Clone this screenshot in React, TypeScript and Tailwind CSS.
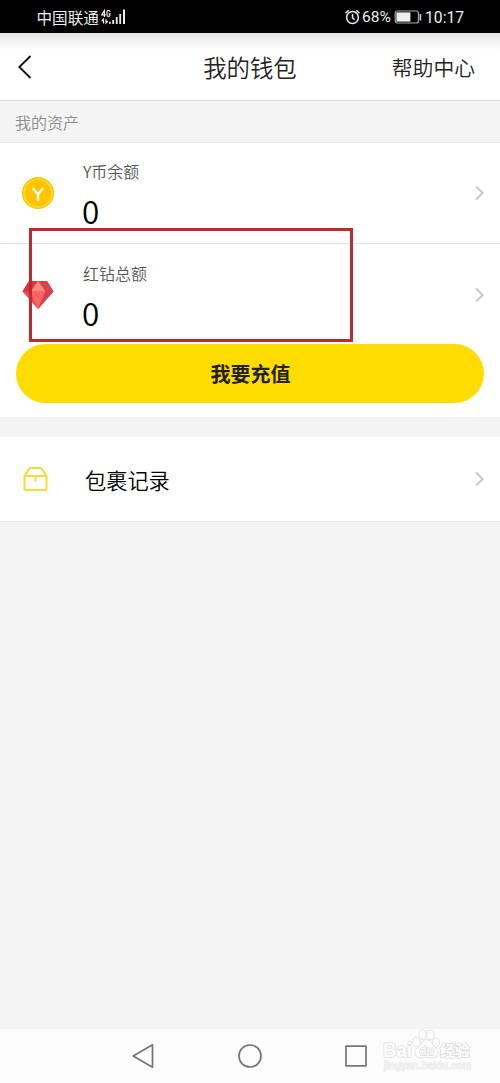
import type { ReactNode } from "react";

function StatusBar() {
  return (
    <div className="flex h-[33px] shrink-0 items-center bg-black pr-[35px] pl-[36.5px] text-[#eeeeee]">
      <span className="relative top-px text-[15.6px] leading-none">中国联通</span>
      <svg className="ml-[2px]" width="25" height="16" viewBox="0 0 25 16" fill="currentColor">
        <g fill="none" stroke="currentColor" strokeWidth="1.2">
          <path d="M3.4 8V1.5L.7 5.900h4.100M9 2.800C9 .9 6 .9 6 2.800v3.100c0 2 3 2 3 0V4.900H7.600" />
          <path d="M.8 12l1.700-1.800V14.500M5 10.200V14l1.800-1.800" />
        </g>
        <path d="M8.200 12.800h1.500V15H8.200zM11.300 11h1.800v4h-1.800zM14.800 8h1.800v7h-1.800zM18.300 5h1.800v10h-1.800zM22 .5h2V15h-2z" />
      </svg>

      <div className="ml-auto flex items-center font-[Roboto] text-[16px] leading-none">
        <svg width="17" height="16" viewBox="0 0 17 16" fill="none" stroke="currentColor" strokeWidth="1.5">
          <circle cx="7.5" cy="8.5" r="5.9" />
          <path d="M7.500 5v3.800l2 2M.5 4.200l3.200-2.900M14.500 4.200l-3.200-2.900" />
        </svg>
        <span className="relative top-px w-[32px] text-[15.5px]">68%</span>
        <svg width="28" height="14" viewBox="0 0 28 14">
          <rect x="1.2" y="1" width="23.2" height="12" rx="2" fill="none" stroke="#a8a8a8" strokeWidth="1.2" />
          <rect x="2.4" y="2.4" width="14" height="9.2" fill="#eeeeee" />
          <path d="M25.600 4h1.600v6.500h-1.600z" fill="#d5d5d5" />
        </svg>
        <span className="relative top-px ml-[3px] w-[40px] text-[15.7px] whitespace-nowrap">10:17</span>
      </div>
    </div>
  );
}

function Header() {
  return (
    <header className="grid h-[68px] shrink-0 grid-cols-3 items-center border-b border-[#dedede] bg-linear-to-b from-[#e5e5e5] to-white to-25% pr-[25px] pl-[17px] text-[#222222]">
      <svg width="16" height="26" viewBox="0 0 16 26" fill="none" stroke="#111111" strokeWidth="1.8">
        <path d="M13.5 2L2.3 13l11.2 11" />
      </svg>
      <h1 className="pt-0.5 text-center text-[23.4px] leading-none font-[350] whitespace-nowrap">
        <span className="relative left-[4px]">我的钱包</span>
      </h1>
      <span className="pt-0.5 text-right text-[20.8px] leading-none font-[350]">帮助中心</span>
    </header>
  );
}

function Chevron() {
  return (
    <svg
      className="mr-[15px] ml-auto"
      width="10"
      height="16"
      viewBox="0 0 10 16"
      fill="none"
      stroke="#c4c4c4"
      strokeWidth="1.8"
    >
      <path d="M1 1.500L7.700 8 1 14.500" />
    </svg>
  );
}

function CoinIcon() {
  return (
    <svg width="32" height="32" viewBox="0 0 32 32">
      <circle cx="16" cy="16" r="16" fill="#f8bf13" />
      <circle cx="16" cy="16" r="14" fill="#ffc400" stroke="#ffdc13" strokeWidth="1.7" />
      <path d="M10.800 11l5.200 6.500L21.200 11M16 17v7" fill="none" stroke="#fffbe0" strokeWidth="2.6" />
    </svg>
  );
}

function DiamondIcon() {
  return (
    <svg width="32" height="28" viewBox="0 0 32 28">
      <path d="M7 0h18l6.500 10.500L16 28 .5 10.500z" fill="#e84a50" />
      <path d="M7 0h9L8.500 10.500H.5z" fill="#d9343c" />
      <path d="M16 0h9l6.500 10.500h-8z" fill="#d6434d" />
      <path d="M16 0l7.500 10.500h-15z" fill="#ff8a80" />
      <path d="M8.500 10.500h15L16 28z" fill="#ff6262" />
      <path d="M23.500 10.500h8L16 28z" fill="#d6424b" />
    </svg>
  );
}

function PackageIcon() {
  return (
    <svg width="25" height="24" viewBox="0 0 25 24" fill="none" stroke="#f6dc35" strokeWidth="2" strokeLinejoin="round">
      <path d="M1.500 9l4.700-7.200q.5-.8 1.400-.8h9.800q.9 0 1.400.8L23.500 9v12.500q0 1.500-1.500 1.500H3q-1.500 0-1.500-1.500zM1.500 9h22M12.500 9v5.500" />
    </svg>
  );
}

function AssetRow({ icon, label, value }: { icon: ReactNode; label: string; value: string }) {
  return (
    <div className="flex h-full items-center">
      <div className="flex w-[76px] shrink-0 justify-center">{icon}</div>
      <div className="flex flex-col pt-[3px] pl-[7px]">
        <span className="text-[16px] leading-[20px] font-[350] text-[#555555]">{label}</span>
        <span className="mt-[11px] -ml-px text-[31.5px] leading-[36px] font-[350] text-black">{value}</span>
      </div>
      <Chevron />
    </div>
  );
}

function Watermark() {
  return (
    <svg
      className="absolute right-[26px] bottom-[8px]"
      width="94"
      height="48"
      viewBox="0 0 94 48"
      fill="#fdfdfd"
      stroke="#dcdcdc"
      strokeWidth="1.6"
      strokeLinejoin="round"
      paintOrder="stroke"
    >
      <text
        x="3"
        y="30"
        fontSize="20.5"
        fontWeight="700"
        fontFamily="Liberation Sans"
        textLength="29"
        lengthAdjust="spacingAndGlyphs"
      >
        Bai
      </text>
      <ellipse cx="36.5" cy="15" rx="3.3" ry="4.3" />
      <ellipse cx="42.5" cy="7.5" rx="3.3" ry="4.5" />
      <ellipse cx="50.5" cy="8" rx="3.3" ry="4.5" />
      <ellipse cx="56" cy="15.5" rx="3.2" ry="4.2" />
      <path d="M46.500 13c4 0 5 4.500 8 7s4 4 3 7-4 4-7 3.500-5-.5-8 0-6-.5-7-3.500 0-4.500 3-7 4-7 8-7z" />
      <text x="39.5" y="28" fontSize="12.5" fontFamily="Liberation Sans">
        du
      </text>
      <text x="60" y="29" fontSize="15" fontWeight="700" fontFamily="Noto Sans CJK SC">
        经验
      </text>
      <text x="4" y="42" fontSize="10" fontFamily="Liberation Sans" textLength="87" fill="#f4f4f4" stroke="#e6e6e6" strokeWidth="1">
        jingyan.baidu.com
      </text>
    </svg>
  );
}

function NavigationBar() {
  return (
    <nav className="relative flex h-[54px] shrink-0 items-center justify-center gap-[80px] bg-[#fcfcfc]">
      <svg width="26" height="26" viewBox="0 0 26 26" fill="none" stroke="#757575" strokeWidth="1.7" strokeLinejoin="round">
        <path d="M21.500 1.800v22.400L2.200 13z" />
      </svg>
      <svg width="26" height="26" viewBox="0 0 26 26" fill="none" stroke="#757575" strokeWidth="1.7">
        <circle cx="13" cy="13" r="11" />
      </svg>
      <svg width="26" height="26" viewBox="0 0 26 26" fill="none" stroke="#757575" strokeWidth="1.7" strokeLinejoin="round">
        <rect x="3" y="3.2" width="20" height="19.6" />
      </svg>
      <Watermark />
    </nav>
  );
}

export default function App() {
  return (
    <div className="flex h-[1083px] w-[500px] flex-col overflow-hidden bg-[#f4f4f4] font-['Noto_Sans_CJK_SC',sans-serif]">
      <StatusBar />
      <Header />

      <div className="flex h-[42px] shrink-0 items-center border-b border-[#e5e5e5] pl-[15px] text-[16px] leading-none font-[350] text-[#8c8c8c]">
        我的资产
      </div>

      <section className="relative h-[274px] shrink-0 bg-white">
        <div className="h-[101px] border-b border-[#e2e2e2]">
          <AssetRow icon={<CoinIcon />} label="Y币余额" value="0" />
        </div>
        <div className="h-[100px] pt-px">
          <AssetRow icon={<DiamondIcon />} label="红钻总额" value="0" />
        </div>
        <div className="px-4">
          <button className="flex h-[59px] w-full items-center justify-center rounded-full bg-[#ffdc00] pt-px pl-px text-[20px] leading-none font-bold text-[#222222]">
            我要充值
          </button>
        </div>

        {/* highlight around the diamond balance */}
        <div className="absolute top-[85px] left-[29px] h-[114px] w-[324px] border-3 border-[#c1272d]" />
      </section>

      <section className="mt-5 flex h-[85px] shrink-0 items-center border-b border-[#e5e5e5] bg-white">
        <div className="flex w-[85px] shrink-0 pl-[23px]">
          <PackageIcon />
        </div>
        <span className="pt-px text-[21.2px] leading-none font-[350] text-black">包裹记录</span>
        <Chevron />
      </section>

      <main className="flex-1" />
      <NavigationBar />
    </div>
  );
}
